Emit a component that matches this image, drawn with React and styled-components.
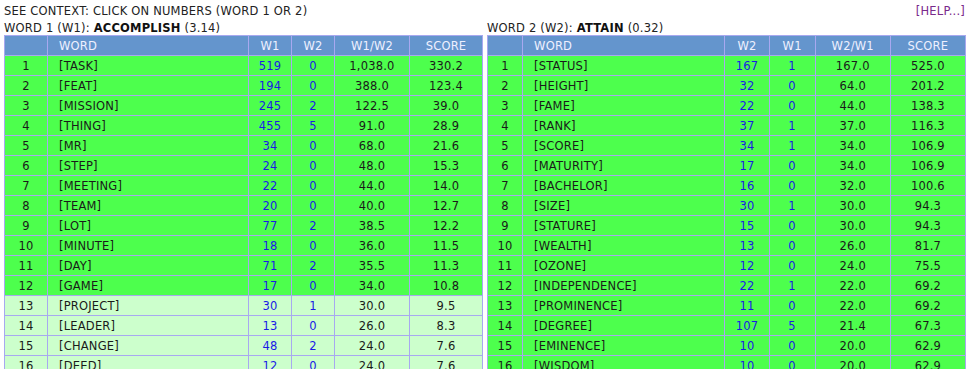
import React from "react";
import styled, { createGlobalStyle } from "styled-components";

const Global = createGlobalStyle`
  html, body { margin: 0; padding: 0; background: #fff; }
  body { font-family: "DejaVu Sans", Verdana, sans-serif; font-size: 11.5px; letter-spacing: 0.2px; color: #222; }
`;

const Page = styled.div`
  padding: 3px 1px 0 4px;
`;

const TopBar = styled.div`
  display: flex;
  justify-content: space-between;
  align-items: center;
  height: 16px;
  color: #222;
`;

const Help = styled.a`
  color: #7a2a8a;
  text-decoration: none;
  padding-right: 1px;
`;

const Columns = styled.div`
  display: grid;
  grid-template-columns: 1fr 1fr;
  column-gap: 4px;
  margin-top: 3px;
`;

const Title = styled.div`
  height: 13px;
  line-height: 13px;
  color: #222;
  b { color: #111; }
`;

const Table = styled.table`
  width: 100%;
  border-collapse: collapse;
  table-layout: fixed;
  border: 1px solid #a8a8f0;
`;

const Th = styled.th`
  background: #6495cd;
  color: #eef0ff;
  font-weight: normal;
  height: 19px;
  padding: 0;
  border: 1px solid #a8a8f0;
  text-align: ${(p) => (p.$left ? "left" : "center")};
  padding-left: ${(p) => (p.$left ? "11px" : "0")};
`;

const Row = styled.tr`
  background: ${(p) => (p.$strong ? "#4dff4d" : "#ccffcc")};
`;

const Td = styled.td`
  height: 19px;
  padding: 0;
  border: 1px solid #a8a8f0;
  text-align: ${(p) => (p.$left ? "left" : "center")};
  padding-left: ${(p) => (p.$left ? "11px" : "0")};
  color: ${(p) => (p.$link ? "#1a1ae6" : "#1a1a1a")};
  white-space: nowrap;
  overflow: hidden;
`;

const left = [
  ["TASK", 519, 0, "1,038.0", "330.2"],
  ["FEAT", 194, 0, "388.0", "123.4"],
  ["MISSION", 245, 2, "122.5", "39.0"],
  ["THING", 455, 5, "91.0", "28.9"],
  ["MR", 34, 0, "68.0", "21.6"],
  ["STEP", 24, 0, "48.0", "15.3"],
  ["MEETING", 22, 0, "44.0", "14.0"],
  ["TEAM", 20, 0, "40.0", "12.7"],
  ["LOT", 77, 2, "38.5", "12.2"],
  ["MINUTE", 18, 0, "36.0", "11.5"],
  ["DAY", 71, 2, "35.5", "11.3"],
  ["GAME", 17, 0, "34.0", "10.8"],
  ["PROJECT", 30, 1, "30.0", "9.5"],
  ["LEADER", 13, 0, "26.0", "8.3"],
  ["CHANGE", 48, 2, "24.0", "7.6"],
  ["DEED", 12, 0, "24.0", "7.6"],
];

const right = [
  ["STATUS", 167, 1, "167.0", "525.0"],
  ["HEIGHT", 32, 0, "64.0", "201.2"],
  ["FAME", 22, 0, "44.0", "138.3"],
  ["RANK", 37, 1, "37.0", "116.3"],
  ["SCORE", 34, 1, "34.0", "106.9"],
  ["MATURITY", 17, 0, "34.0", "106.9"],
  ["BACHELOR", 16, 0, "32.0", "100.6"],
  ["SIZE", 30, 1, "30.0", "94.3"],
  ["STATURE", 15, 0, "30.0", "94.3"],
  ["WEALTH", 13, 0, "26.0", "81.7"],
  ["OZONE", 12, 0, "24.0", "75.5"],
  ["INDEPENDENCE", 22, 1, "22.0", "69.2"],
  ["PROMINENCE", 11, 0, "22.0", "69.2"],
  ["DEGREE", 107, 5, "21.4", "67.3"],
  ["EMINENCE", 10, 0, "20.0", "62.9"],
  ["WISDOM", 10, 0, "20.0", "62.9"],
];

function WordTable({ label, word, score, heads, widths, rows, strongCount }) {
  return (
    <div>
      <Title>
        {label}: <b>{word}</b> ({score})
      </Title>
      <Table>
        <colgroup>
          {widths.map((w, i) => (
            <col key={i} style={{ width: w }} />
          ))}
        </colgroup>
        <thead>
          <tr>
            <Th></Th>
            <Th $left>WORD</Th>
            {heads.map((h) => (
              <Th key={h}>{h}</Th>
            ))}
          </tr>
        </thead>
        <tbody>
          {rows.map((r, i) => (
            <Row key={i} $strong={i < strongCount}>
              <Td>{i + 1}</Td>
              <Td $left>[{r[0]}]</Td>
              <Td $link>{r[1]}</Td>
              <Td $link>{r[2]}</Td>
              <Td>{r[3]}</Td>
              <Td>{r[4]}</Td>
            </Row>
          ))}
        </tbody>
      </Table>
    </div>
  );
}

export default function App() {
  return (
    <Page>
      <Global />
      <TopBar>
        <span>SEE CONTEXT: CLICK ON NUMBERS (WORD 1 OR 2)</span>
        <Help href="#">[HELP...]</Help>
      </TopBar>
      <Columns>
        <WordTable
          label="WORD 1 (W1)"
          word="ACCOMPLISH"
          score="3.14"
          heads={["W1", "W2", "W1/W2", "SCORE"]}
          widths={[43, 201, 43, 43, 75, 73]}
          rows={left}
          strongCount={12}
        />
        <WordTable
          label="WORD 2 (W2)"
          word="ATTAIN"
          score="0.32"
          heads={["W2", "W1", "W2/W1", "SCORE"]}
          widths={[35, 202, 44, 46, 75, 75]}
          rows={right}
          strongCount={16}
        />
      </Columns>
    </Page>
  );
}
